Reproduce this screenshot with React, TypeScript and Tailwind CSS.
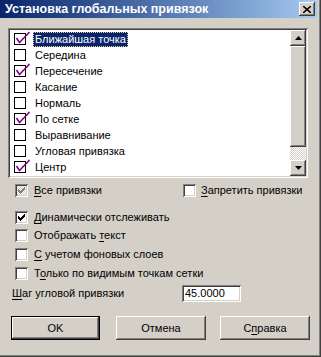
const items: [string, boolean][] = [
  ["Ближайшая точка", true],
  ["Середина", false],
  ["Пересечение", true],
  ["Касание", false],
  ["Нормаль", false],
  ["По сетке", true],
  ["Выравнивание", false],
  ["Угловая привязка", false],
  ["Центр", true],
];

const raised =
  "shadow-[inset_-1px_-1px_0_#404040,inset_1px_1px_0_#ffffff,inset_-2px_-2px_0_#808080,inset_2px_2px_0_#d4d0c8]";
const sunken =
  "shadow-[inset_1px_1px_0_#808080,inset_-1px_-1px_0_#ffffff,inset_2px_2px_0_#404040,inset_-2px_-2px_0_#d4d0c8]";

function ListCheck({ on }: { on: boolean }) {
  return (
    <div className="relative w-[12px] h-[12px] border border-black bg-white shrink-0">
      {on && (
        <svg className="absolute -left-[1px] -top-[4px] overflow-visible" width="18" height="16" viewBox="0 0 18 16">
          <path d="M2.5 8 L5.5 12.5 L15.5 2" fill="none" stroke="#800080" strokeWidth="1.6" />
        </svg>
      )}
    </div>
  );
}

function Check({ on, disabled }: { on?: boolean; disabled?: boolean }) {
  return (
    <div
      className={`relative w-[13px] h-[13px] shrink-0 ${sunken} ${
        disabled
          ? "bg-[repeating-conic-gradient(#ffffff_0%_25%,#d4d0c8_0%_50%)] bg-[length:2px_2px]"
          : "bg-white"
      }`}
    >
      {on && (
        <svg className="absolute left-[3px] top-[3px]" width="7" height="7" viewBox="0 0 7 7">
          <path
            d="M0 2h1v1h1v1h1v-1h1v-1h1v-1h1v-1h1v3h-1v1h-1v1h-1v1h-1v1h-1v-1h-1v-1h-1v-1h-1z"
            fill={disabled ? "#808080" : "#000"}
          />
        </svg>
      )}
    </div>
  );
}

function U({ children }: { children: string }) {
  return <span className="underline underline-offset-[2px]">{children}</span>;
}

function Arrow({ up }: { up?: boolean }) {
  return (
    <svg width="7" height="4" viewBox="0 0 7 4">
      <path d={up ? "M3.5 0 L7 4 L0 4 Z" : "M0 0 L7 0 L3.5 4 Z"} fill="#000" />
    </svg>
  );
}

function Row({ children, on, y }: { children: React.ReactNode; on?: boolean; y: string }) {
  return (
    <div className={`flex items-center gap-[6px] h-[13px] pl-[15px] ${y}`}>
      <Check on={on} />
      <span className="leading-none">{children}</span>
    </div>
  );
}

export default function App() {
  return (
    <div className="w-[321px] h-[357px] bg-[#d4d0c8] font-['Liberation_Sans',Arial,sans-serif] text-[11px] text-black relative shadow-[inset_-1px_-1px_0_#404040,inset_-2px_-2px_0_#808080]">
      <div className="h-[18px] w-[317px] flex items-center justify-between pl-[5px] pr-[2px] bg-gradient-to-r from-[#0a246a] to-[#a6caf0]">
        <span className="text-white font-bold text-[12.5px] leading-none">Установка глобальных привязок</span>
        <div className={`w-[16px] h-[14px] bg-[#d4d0c8] flex items-center justify-center ${raised}`}>
          <svg width="8" height="7" viewBox="0 0 8 7">
            <path d="M0 0 L8 7 M8 0 L0 7" stroke="#000" strokeWidth="1.6" />
          </svg>
        </div>
      </div>

      <div className={`ml-[8px] mt-[10px] w-[300px] h-[150px] p-[2px] flex ${sunken}`}>
        <div className="flex-1 bg-white pt-[1px]">
          {items.map(([label, on], i) => (
            <div key={label} className="flex items-center h-[16px] pl-[4px]">
              <ListCheck on={on} />
              <span
                className={`ml-[7px] px-[2px] h-[15px] flex items-center leading-none ${
                  i === 0
                    ? "bg-[#0a246a] text-white outline-1 outline-dotted outline-[#e8d08c] -outline-offset-1"
                    : ""
                }`}
              >
                {label}
              </span>
            </div>
          ))}
        </div>
        <div className="w-[16px] flex flex-col">
          <div className={`h-[16px] bg-[#d4d0c8] flex items-center justify-center ${raised}`}>
            <Arrow up />
          </div>
          <div className={`h-[101px] bg-[#d4d0c8] ${raised}`} />
          <div className="flex-1 bg-[repeating-conic-gradient(#ffffff_0%_25%,#d4d0c8_0%_50%)] bg-[length:2px_2px]" />
          <div className={`h-[16px] bg-[#d4d0c8] flex items-center justify-center ${raised}`}>
            <Arrow />
          </div>
        </div>
      </div>

      <div className="flex items-center mt-[6px] h-[13px]">
        <div className="flex items-center gap-[6px] pl-[15px] w-[183px]">
          <Check on disabled />
          <span className="leading-none">
            <U>В</U>се привязки
          </span>
        </div>
        <div className="flex items-center gap-[5px]">
          <Check />
          <span className="leading-none">
            <U>З</U>апретить привязки
          </span>
        </div>
      </div>

      <Row on y="mt-[14px]">
        <U>Д</U>инамически отслеживать
      </Row>
      <Row y="mt-[5px]">
        Отображать <U>т</U>екст
      </Row>
      <Row y="mt-[6px]">
        <U>С</U> учетом фоновых слоев
      </Row>
      <Row y="mt-[6px]">
        Т<U>о</U>лько по видимым точкам сетки
      </Row>

      <div className="flex items-center mt-[5px] h-[17px]">
        <span className="pl-[12px] w-[182px] leading-none">
          <U>Ш</U>аг угловой привязки
        </span>
        <div className={`w-[59px] h-[17px] bg-white px-[3px] flex items-center leading-none ${sunken}`}>45.0000</div>
      </div>

      <div className="flex mt-[14px] pl-[11px] gap-[17px]">
        <div className="w-[89px] h-[24px] border border-black">
          <div className={`w-full h-full flex items-center justify-center ${raised}`}>OK</div>
        </div>
        <div className={`w-[90px] h-[24px] flex items-center justify-center ${raised} -ml-[1px]`}>Отмена</div>
        <div className={`w-[90px] h-[24px] flex items-center justify-center ${raised} -ml-[3px]`}>
          С<U>п</U>равка
        </div>
      </div>
    </div>
  );
}
